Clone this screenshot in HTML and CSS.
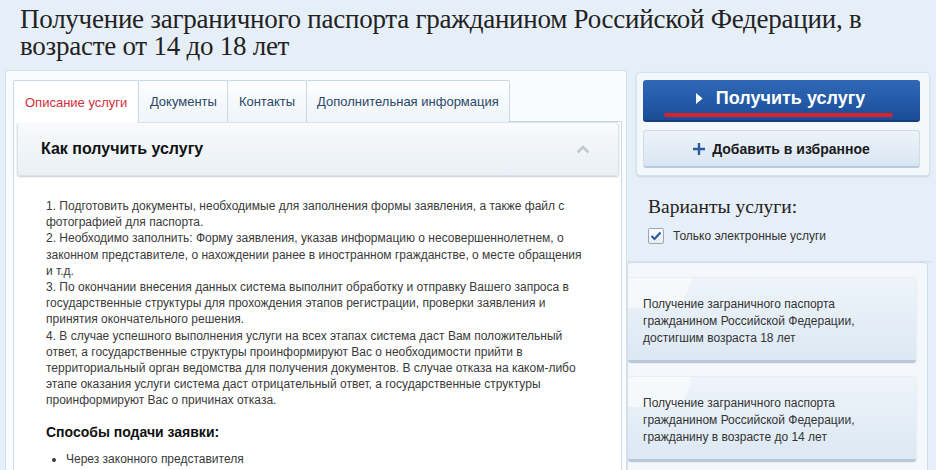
FILE: index.html
```html
<!DOCTYPE html>
<html lang="ru">
<head>
<meta charset="utf-8">
<title>Получение заграничного паспорта</title>
<link rel="stylesheet" href="styles.css">
</head>
<body>
<h1 class="page-title">Получение заграничного паспорта гражданином Российской Федерации, в возрасте от 14 до 18 лет</h1>
<div class="layout">
  <div class="main-panel">
    <div class="tabs">
      <div class="tab active">Описание услуги</div>
      <div class="tab">Документы</div>
      <div class="tab">Контакты</div>
      <div class="tab">Дополнительная информация</div>
    </div>
    <div class="tab-content">
      <div class="acc-head">
        <span class="acc-title">Как получить услугу</span>
        <svg class="chevron" width="14" height="9" viewBox="0 0 14 9"><path d="M1.5 7.5 L7 2 L12.5 7.5" fill="none" stroke="#c3c8cc" stroke-width="2.6"/></svg>
      </div>
      <div class="acc-body">
        <p class="steps">1. Подготовить документы, необходимые для заполнения формы заявления, а также файл с фотографией для паспорта.<br>2. Необходимо заполнить: Форму заявления, указав информацию о несовершеннолетнем, о законном представителе, о нахождении ранее в иностранном гражданстве, о месте обращения и т.д.<br>3. По окончании внесения данных система выполнит обработку и отправку Вашего запроса в государственные структуры для прохождения этапов регистрации, проверки заявления и принятия окончательного решения.<br>4. В случае успешного выполнения услуги на всех этапах система даст Вам положительный ответ, а государственные структуры проинформируют Вас о необходимости прийти в территориальный орган ведомства для получения документов. В случае отказа на каком-либо этапе оказания услуги система даст отрицательный ответ, а государственные структуры проинформируют Вас о причинах отказа.</p>
        <h3 class="sub-title">Способы подачи заявки:</h3>
        <ul class="ways">
          <li>Через законного представителя</li>
        </ul>
      </div>
    </div>
  </div>
  <div class="side">
    <div class="actions">
      <div class="btn-primary">
        <svg class="tri" width="7" height="11" viewBox="0 0 7 11"><path d="M0 0 L6.5 5.5 L0 11 Z" fill="#fff"/></svg>
        <span>Получить услугу</span>
        <span class="red-line"></span>
      </div>
      <div class="btn-fav">
        <svg class="plus" width="12" height="12" viewBox="0 0 12 12"><path d="M6 0 V12 M0 6 H12" stroke="#2b5c9f" stroke-width="2.4"/></svg>
        <span>Добавить в избранное</span>
      </div>
    </div>
    <div class="variants">
      <div class="variants-title">Варианты услуги:</div>
      <label class="check-row">
        <span class="checkbox"><svg width="12" height="10" viewBox="0 0 12 10"><path d="M1.5 5 L4.5 8 L10.5 1.5" fill="none" stroke="#2c5d9d" stroke-width="2.2"/></svg></span>
        <span>Только электронные услуги</span>
      </label>
    </div>
    <div class="cards">
      <div class="card">Получение заграничного паспорта гражданином Российской Федерации, достигшим возраста 18 лет</div>
      <div class="card">Получение заграничного паспорта гражданином Российской Федерации, гражданину в возрасте до 14 лет</div>
    </div>
  </div>
</div>
</body>
</html>
```

FILE: styles.css
```css
html, body {
  margin: 0;
  padding: 0;
}
body {
  background: #e6eff8;
  font-family: "Liberation Sans", Arial, sans-serif;
  color: #333;
  width: 936px;
  height: 470px;
  overflow: hidden;
}
.page-title {
  margin: 0;
  padding: 6px 20px 0 20px;
  font-family: "Liberation Serif", "Times New Roman", serif;
  font-weight: normal;
  font-size: 27px;
  letter-spacing: -0.25px;
  line-height: 27px;
  color: #222;
  height: 64px;
  box-sizing: border-box;
}
.layout {
  display: flex;
  padding-left: 5px;
  margin-top: 6px;
}
.main-panel {
  width: 622px;
  box-sizing: border-box;
  border: 1px solid #d3e1ed;
  border-bottom: none;
  border-radius: 3px 3px 0 0;
  background: #f9fbfd;
  padding: 9px 4px 0 7px;
  height: 400px;
  overflow: hidden;
}
.tabs {
  display: flex;
  height: 42px;
  position: relative;
  z-index: 2;
}
.tab {
  box-sizing: border-box;
  height: 42px;
  padding: 0 10.5px;
  display: flex;
  align-items: center;
  font-size: 13px;
  color: #2c4767;
  border: 1px solid #c9d8e5;
  border-bottom: none;
  margin-right: -1px;
  background: linear-gradient(#fdfeff, #eef4f9);
  border-radius: 2px 2px 0 0;
}
.tab.active {
  color: #d12e3a;
  background: #fff;
  height: 43px;
  padding: 0 11px;
}
.tab-content {
  border: 1px solid #c9d9e6;
  border-bottom: none;
  background: #fff;
  height: 349px;
  box-sizing: border-box;
  margin-top: -1px;
}
.acc-head {
  margin: 0 2px 0 3px;
  height: 54px;
  box-sizing: border-box;
  border: 1px solid #d9e3ec;
  border-radius: 3px;
  background: linear-gradient(#f8fafc, #e9f0f5);
  box-shadow: 0 1px 2px rgba(90, 110, 130, 0.35);
  display: flex;
  align-items: center;
  justify-content: space-between;
  padding: 0 28px 0 23px;
}
.acc-title {
  font-weight: bold;
  font-size: 16px;
  color: #111;
}
.chevron {
  display: block;
}
.acc-body {
  padding: 22px 0 0 32px;
  width: 543px;
}
.steps {
  margin: 0;
  font-size: 12px;
  line-height: 16.2px;
  color: #3a3a3a;
}
.sub-title {
  margin: 14px 0 0;
  font-size: 14px;
  line-height: 18px;
  color: #111;
}
.ways {
  margin: 10px 0 0;
  padding-left: 20px;
  font-size: 12px;
  line-height: 16px;
  color: #3a3a3a;
}
.side {
  width: 305px;
}
.actions {
  margin: 2px 2px 0 9px;
  box-sizing: border-box;
  border: 1px solid #d6e2ed;
  border-radius: 4px;
  background: #f4f8fb;
  box-shadow: 0 1px 2px rgba(120, 150, 180, 0.3);
  padding: 7px 9px 7px 6px;
  display: flex;
  flex-direction: column;
  gap: 8px;
}
.btn-primary {
  position: relative;
  height: 42px;
  box-sizing: border-box;
  border-radius: 3px;
  background: linear-gradient(#3169b7, #2258a6 60%, #1b4d96);
  border-bottom: 2px solid #153f7c;
  display: flex;
  align-items: center;
  justify-content: center;
  gap: 13px;
  color: #fff;
  font-weight: bold;
  font-size: 18px;
  padding-bottom: 3px;
}
.tri {
  display: block;
  margin-left: -2px;
}
.red-line {
  position: absolute;
  left: 21px;
  right: 27px;
  bottom: 3px;
  height: 4px;
  border-radius: 2px;
  background: #d9232b;
}
.btn-fav {
  height: 38px;
  box-sizing: border-box;
  border-radius: 3px;
  border: 1px solid #cddceb;
  border-bottom: 2px solid #b9cbdc;
  background: linear-gradient(#edf3f9, #d9e6f2);
  display: flex;
  align-items: center;
  justify-content: center;
  gap: 7px;
  font-weight: bold;
  font-size: 14px;
  color: #1a1a1a;
}
.plus {
  display: block;
  margin-left: 0;
}
.variants {
  height: 86px;
  box-sizing: border-box;
  padding: 20px 0 0 21px;
  border-bottom: 1px solid #d3e1ec;
}
.variants-title {
  font-family: "Liberation Serif", "Times New Roman", serif;
  font-size: 19.5px;
  line-height: 22px;
  color: #222;
}
.check-row {
  display: flex;
  align-items: center;
  gap: 9px;
  margin-top: 10px;
  font-size: 12px;
  color: #333;
}
.checkbox {
  width: 16px;
  height: 16px;
  box-sizing: border-box;
  border: 1px solid #9aa8b6;
  border-radius: 2px;
  background: linear-gradient(#ffffff, #e8edf2);
  display: flex;
  align-items: center;
  justify-content: center;
}
.cards {
  box-sizing: border-box;
  border: 1px solid #cfdeea;
  border-bottom: none;
  border-radius: 4px 4px 0 0;
  background: #f4f8fc;
  padding: 15px 14px 0 0;
  display: flex;
  flex-direction: column;
  gap: 14px;
  height: 208px;
  margin-right: 4px;
  overflow: hidden;
}
.card {
  flex: none;
  width: 288px;
  height: 85px;
  box-sizing: border-box;
  padding: 18px 20px 0 15px;
  border-radius: 3px;
  font-size: 12px;
  line-height: 17px;
  color: #333;
  background:
    linear-gradient(110deg, rgba(255, 255, 255, 0.55) 0, rgba(255, 255, 255, 0.55) 60px, rgba(255, 255, 255, 0) 61px) top left / 100% 30px no-repeat,
    linear-gradient(#eef4fa, #dce8f3);
  border-bottom: 3px solid #b6c8d9;
  box-shadow: 0 0 2px rgba(120, 150, 180, 0.35);
}
```
